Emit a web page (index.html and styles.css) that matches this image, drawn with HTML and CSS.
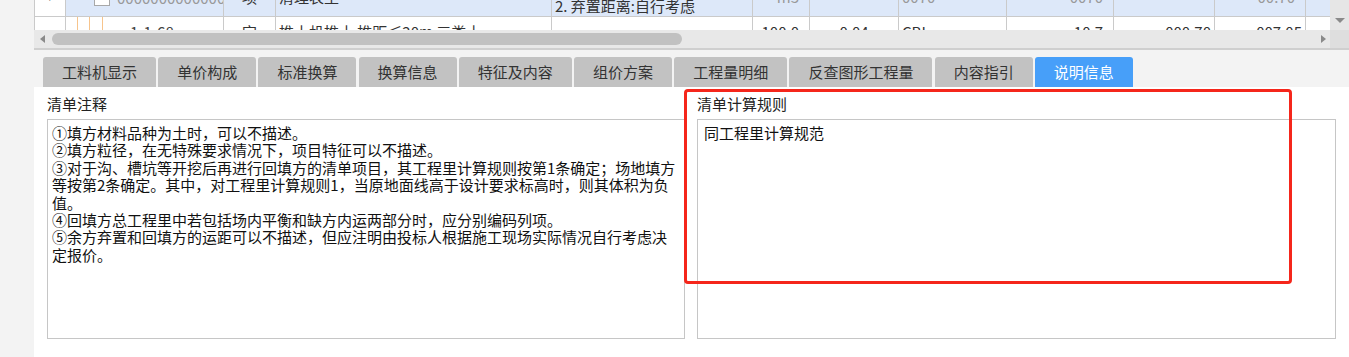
FILE: index.html
```html
<!DOCTYPE html>
<html lang="zh-CN">
<head>
    <meta charset="UTF-8">
    <title>说明信息</title>
    <link rel="stylesheet" href="styles.css">
</head>
<body>
    <div class="workspace">
        <div class="grid-area">
            <div class="grid-main">
                <div class="grid-clip">
                    <table class="bill-table">
                        <colgroup>
                            <col style="width:31px"><col style="width:158px"><col style="width:52px">
                            <col style="width:276px"><col style="width:201px"><col style="width:57px">
                            <col style="width:89px"><col style="width:108px"><col style="width:107px">
                            <col style="width:101px"><col style="width:91px"><col style="width:25px">
                        </colgroup>
                        <tr class="row-bill">
                            <td class="cell-no">▾</td>
                            <td class="cell-tree"><span class="check"></span><span class="code">0000000000000</span></td>
                            <td class="center">项</td>
                            <td>清理表土</td>
                            <td class="cell-desc">1. 土壤类别:三类土<br>2. 弃置距离:自行考虑</td>
                            <td class="num faint">m3</td>
                            <td></td>
                            <td class="faint">0070</td>
                            <td class="num faint">0070</td>
                            <td></td>
                            <td class="num faint">00.70</td>
                            <td></td>
                        </tr>
                        <tr class="row-quota">
                            <td class="cell-no"></td>
                            <td class="cell-tree">1-1-68</td>
                            <td class="center">定</td>
                            <td>推土机推土 推距≤20m 三类土</td>
                            <td></td>
                            <td class="num">100.0</td>
                            <td class="center">0.04</td>
                            <td>CBI</td>
                            <td class="num">10.7</td>
                            <td class="num tight">000.70</td>
                            <td class="num tight">007.05</td>
                            <td></td>
                        </tr>
                    </table>
                </div>
                <div class="hscroll">
                    <span class="arrow-left"></span>
                    <span class="thumb"></span>
                    <span class="arrow-right"></span>
                </div>
            </div>
            <div class="vscroll">
                <span class="arrow-down"></span>
                <span class="corner"></span>
            </div>
        </div>

        <div class="tabs">
            <div class="tab">工料机显示</div>
            <div class="tab">单价构成</div>
            <div class="tab">标准换算</div>
            <div class="tab">换算信息</div>
            <div class="tab">特征及内容</div>
            <div class="tab">组价方案</div>
            <div class="tab">工程量明细</div>
            <div class="tab">反查图形工程量</div>
            <div class="tab">内容指引</div>
            <div class="tab active">说明信息</div>
        </div>

        <div class="panel">
            <div class="field">
                <div class="field-title">清单注释</div>
                <div class="note-box">①填方材料品种为土时，可以不描述。<br>②填方粒径，在无特殊要求情况下，项目特征可以不描述。<br>③对于沟、槽坑等开挖后再进行回填方的清单项目，其工程里计算规则按第1条确定；场地填方等按第2条确定。其中，对工程里计算规则1，当原地面线高于设计要求标高时，则其体积为负值。<br>④回填方总工程里中若包括场内平衡和缺方内运两部分时，应分别编码列项。<br>⑤余方弃置和回填方的运距可以不描述，但应注明由投标人根据施工现场实际情况自行考虑决定报价。</div>
            </div>
            <div class="field">
                <div class="field-title">清单计算规则</div>
                <div class="note-box rule-box">同工程里计算规范</div>
            </div>
            <div class="highlight"></div>
        </div>
    </div>
</body>
</html>
```

FILE: styles.css
```css
* {
    margin: 0;
    padding: 0;
    box-sizing: border-box;
}

body {
    width: 1349px;
    height: 357px;
    overflow: hidden;
    background: #f3f3f3;
    font-family: "Noto Sans CJK SC", "Microsoft YaHei", sans-serif;
    color: #333;
}

.workspace {
    margin-left: 34px;
    height: 357px;
    display: flex;
    flex-direction: column;
}

/* top grid */
.grid-area {
    display: flex;
    height: 50px;
    flex-shrink: 0;
    border-bottom: 2px solid #cfcfcf;
}

.grid-main {
    flex: 1;
    min-width: 0;
    display: flex;
    flex-direction: column;
}

.grid-clip {
    height: 30px;
    overflow: hidden;
    background: #fff;
}

.bill-table {
    border-collapse: collapse;
    table-layout: fixed;
    width: 1296px;
    margin-top: -24px;
    font-size: 15px;
    line-height: 17px;
    color: #333;
}

.bill-table td {
    border: 1px solid #cacaca;
    padding: 0 3px;
    white-space: nowrap;
    overflow: hidden;
    vertical-align: middle;
}

.row-bill td {
    height: 40px;
    background: #dde8f9;
}

.row-quota td {
    height: 30px;
}

.bill-table .cell-no {
    background: #fff;
    text-align: center;
    font-size: 11px;
}

.cell-tree {
    background-image:
        linear-gradient(#f7c48c, #f7c48c),
        linear-gradient(#f7c48c, #f7c48c),
        linear-gradient(#f7c48c, #f7c48c);
    background-repeat: no-repeat;
    background-size: 1px 100%, 1px 100%, 1px 100%;
    background-position: 11px 0, 23px 0, 36px 0;
}

.row-bill .cell-tree {
    padding-left: 28px;
    background-size: 1px 100%, 1px 100%, 1px 13px;
    background-position: 11px 0, 23px 0, 36px 100%;
}

.row-quota .cell-tree {
    padding-left: 64px;
    color: #444;
}

.check {
    display: inline-block;
    width: 16px;
    height: 16px;
    border: 1px solid #a8a8a8;
    background: #fff;
    vertical-align: middle;
    margin-right: 7px;
}

.code {
    color: #999;
    vertical-align: middle;
}

.cell-desc {
    padding-left: 2px;
}

.center {
    text-align: center;
}

.num {
    text-align: right;
    padding-right: 10px !important;
}

.num.tight {
    padding-right: 3px !important;
}

.faint {
    color: #999;
}

.hscroll {
    height: 18px;
    background: #e8e8e8;
    display: flex;
    align-items: center;
    padding: 0 4px 0 6px;
}

.arrow-left {
    width: 0;
    height: 0;
    border-top: 4px solid transparent;
    border-bottom: 4px solid transparent;
    border-right: 5px solid #8a8a8a;
}

.thumb {
    width: 630px;
    height: 12px;
    margin-left: 7px;
    border-radius: 6px;
    background: #c1c1c1;
}

.arrow-right {
    margin-left: auto;
    width: 0;
    height: 0;
    border-top: 4px solid transparent;
    border-bottom: 4px solid transparent;
    border-left: 5px solid #8a8a8a;
}

.vscroll {
    width: 19px;
    background: #e6e6e6;
    display: flex;
    flex-direction: column;
    align-items: center;
}

.arrow-down {
    margin-top: 18px;
    width: 0;
    height: 0;
    border-left: 5px solid transparent;
    border-right: 5px solid transparent;
    border-top: 5px solid #8a8a8a;
}

.corner {
    margin-top: auto;
    width: 100%;
    height: 18px;
    background: #dedede;
}

/* tabs */
.tabs {
    display: flex;
    gap: 2.2px;
    padding: 7px 0 0 9px;
    flex-shrink: 0;
}

.tab {
    height: 30px;
    line-height: 30px;
    padding: 0 19px;
    font-size: 15px;
    color: #333;
    background: #c2c2c2;
    border-radius: 3px 3px 0 0;
    white-space: nowrap;
}

.tab.active {
    background: #479ff9;
    color: #fff;
}

/* description panel */
.panel {
    flex: 1;
    position: relative;
    background: #fff;
    padding: 8px 13px 0;
    display: grid;
    grid-template-columns: 638px 639px;
    column-gap: 12px;
    align-content: start;
}

.field-title {
    height: 24px;
    line-height: 18px;
    font-size: 15px;
    color: #222;
}

.note-box {
    height: 220px;
    border: 1px solid #c6c6c6;
    padding: 4px 6px 0 4px;
    font-size: 15px;
    line-height: 17.4px;
    color: #111;
    background: #fff;
}

.rule-box {
    padding-left: 6px;
}

.highlight {
    position: absolute;
    left: 650px;
    top: 2px;
    width: 608px;
    height: 195px;
    border: 3px solid #f5261b;
    border-radius: 4px;
    pointer-events: none;
}
```
